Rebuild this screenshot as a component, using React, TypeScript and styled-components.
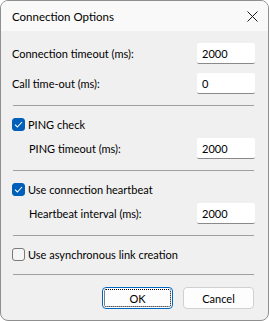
import { createGlobalStyle } from "styled-components";
import styled from "styled-components";

const GlobalStyle = createGlobalStyle`
  html, body {
    margin: 0;
    padding: 0;
    background: #ffffff;
  }
  * {
    box-sizing: border-box;
  }
`;

const Window = styled.div`
  width: 269px;
  height: 321px;
  display: flex;
  flex-direction: column;
  border: 1px solid #8f8f8f;
  border-radius: 8px;
  overflow: hidden;
  background: #f0f0f0;
  font-family: Lato, "Segoe UI", sans-serif;
  font-size: 11px;
  color: #000000;
`;

const TitleBar = styled.div`
  height: 30px;
  display: flex;
  align-items: center;
  justify-content: space-between;
  padding: 0 10px 0 11px;
  background: #f9f9f9;
`;

const Title = styled.span`
  font-size: 11.5px;
`;

const CloseIcon = styled.svg`
  width: 11px;
  height: 11px;
`;

const Body = styled.div`
  display: flex;
  flex-direction: column;
  padding: 12px 13px 0 11px;
`;

const FieldRow = styled.div<{ $indent?: boolean; $gap?: number }>`
  height: 21px;
  display: flex;
  align-items: center;
  justify-content: space-between;
  margin-top: ${({ $gap = 0 }) => $gap}px;
  padding-left: ${({ $indent }) => ($indent ? "17px" : "0")};
`;

const Input = styled.div`
  width: 58px;
  height: 21px;
  display: flex;
  align-items: center;
  padding-left: 5px;
  background: #ffffff;
  border-bottom: 1px solid #8a8a8a;
  border-radius: 2px;
`;

const Separator = styled.hr<{ $before: number }>`
  margin: ${({ $before }) => $before}px 1px 12px 1px;
  border: none;
  height: 1px;
  background: #a0a0a0;
`;

const CheckRow = styled.label`
  height: 13px;
  display: flex;
  align-items: center;
  gap: 3px;
`;

const Box = styled.span<{ $checked: boolean }>`
  width: 13px;
  height: 13px;
  display: flex;
  align-items: center;
  justify-content: center;
  border-radius: 3px;
  background: ${({ $checked }) => ($checked ? "#005fb8" : "#f5f5f5")};
  border: 1px solid ${({ $checked }) => ($checked ? "#005fb8" : "#7a7a7a")};
`;

const Buttons = styled.div`
  display: flex;
  justify-content: flex-end;
  gap: 10px;
  padding-right: 1px;
`;

const Button = styled.button<{ $default?: boolean }>`
  width: 71px;
  height: 22px;
  position: relative;
  font-family: inherit;
  font-size: 11px;
  color: #000000;
  background: #fdfdfd;
  border: 1px solid ${({ $default }) => ($default ? "#0067c0" : "#d0d0d0")};
  border-radius: 4px;
  padding: 0;

  &::after {
    content: "";
    display: ${({ $default }) => ($default ? "block" : "none")};
    position: absolute;
    inset: 1px;
    border: 1px dotted #000000;
    border-radius: 2px;
  }
`;

const Checkbox = ({ checked, label }: { checked: boolean; label: string }) => (
  <CheckRow>
    <Box $checked={checked}>
      {checked && (
        <svg width="9" height="7" viewBox="0 0 9 7">
          <path d="M1 3.6 L3.4 6 L8 1" fill="none" stroke="#ffffff" strokeWidth="1.1" />
        </svg>
      )}
    </Box>
    <span>{label}</span>
  </CheckRow>
);

export default function App() {
  return (
    <>
      <GlobalStyle />
      <Window>
        <TitleBar>
          <Title>Connection Options</Title>
          <CloseIcon viewBox="0 0 11 11">
            <path d="M0.5 0.5 L10.5 10.5 M10.5 0.5 L0.5 10.5" stroke="#1a1a1a" strokeWidth="1" />
          </CloseIcon>
        </TitleBar>
        <Body>
          <FieldRow>
            <span>Connection timeout (ms):</span>
            <Input>2000</Input>
          </FieldRow>
          <FieldRow $gap={9}>
            <span>Call time-out (ms):</span>
            <Input>0</Input>
          </FieldRow>
          <Separator $before={11} />
          <Checkbox checked label="PING check" />
          <FieldRow $indent $gap={7}>
            <span>PING timeout (ms):</span>
            <Input>2000</Input>
          </FieldRow>
          <Separator $before={11} />
          <Checkbox checked label="Use connection heartbeat" />
          <FieldRow $indent $gap={7}>
            <span>Heartbeat interval (ms):</span>
            <Input>2000</Input>
          </FieldRow>
          <Separator $before={11} />
          <Checkbox checked={false} label="Use asynchronous link creation" />
          <Separator $before={13} />
          <Buttons>
            <Button $default>OK</Button>
            <Button>Cancel</Button>
          </Buttons>
        </Body>
      </Window>
    </>
  );
}
